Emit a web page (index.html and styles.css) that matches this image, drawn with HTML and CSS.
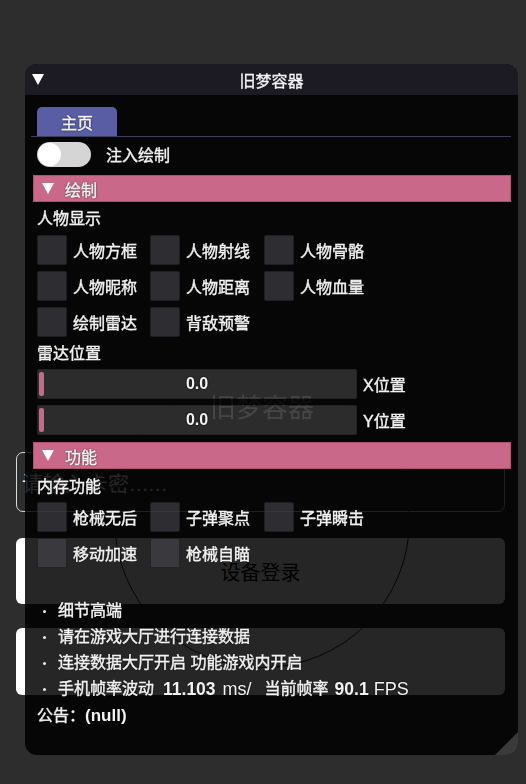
FILE: index.html
```html
<!DOCTYPE html>
<html lang="zh-CN">
<head>
<meta charset="utf-8">
<title>旧梦容器</title>
<link rel="stylesheet" href="styles.css">
</head>
<body>
<div class="backdrop">
  <div class="ghost-input"><span class="ghost-placeholder">请输入卡密......</span></div>
  <div class="ghost-btn ghost-login">设备登录</div>
  <div class="ghost-btn ghost-panel"></div>
  <div class="ghost-arc"></div>
</div>

<div class="window">
  <div class="titlebar">
    <span class="tri tri-title"></span>
    <span class="title">旧梦容器</span>
    <span></span>
  </div>
  <div class="content">
    <div class="tabbar"><div class="tab">主页</div></div>

    <div class="toggle-row">
      <span class="toggle"><span class="knob"></span></span>
      <span class="label">注入绘制</span>
    </div>

    <div class="header h-first"><span class="tri tri-header"></span><span>绘制</span></div>
    <div class="text-row">人物显示</div>
    <div class="cb-grid">
      <div class="cb"><span class="box"></span><span>人物方框</span></div>
      <div class="cb"><span class="box"></span><span>人物射线</span></div>
      <div class="cb"><span class="box"></span><span>人物骨骼</span></div>
      <div class="cb"><span class="box"></span><span>人物昵称</span></div>
      <div class="cb"><span class="box"></span><span>人物距离</span></div>
      <div class="cb"><span class="box"></span><span>人物血量</span></div>
      <div class="cb"><span class="box"></span><span>绘制雷达</span></div>
      <div class="cb"><span class="box"></span><span>背敌预警</span></div>
    </div>
    <div class="text-row">雷达位置</div>
    <div class="sliders">
      <div class="slider-row">
        <div class="slider"><span class="grab"></span><span class="val">0.0</span></div>
        <span class="slabel">X位置</span>
      </div>
      <div class="slider-row">
        <div class="slider"><span class="grab"></span><span class="val">0.0</span></div>
        <span class="slabel">Y位置</span>
      </div>
    </div>

    <div class="header h-second"><span class="tri tri-header"></span><span>功能</span></div>
    <div class="text-row tr-mem">内存功能</div>
    <div class="cb-grid cb-grid-mem">
      <div class="cb"><span class="box"></span><span>枪械无后</span></div>
      <div class="cb"><span class="box"></span><span>子弹聚点</span></div>
      <div class="cb"><span class="box"></span><span>子弹瞬击</span></div>
      <div class="cb"><span class="box"></span><span>移动加速</span></div>
      <div class="cb"><span class="box"></span><span>枪械自瞄</span></div>
    </div>

    <ul class="bullets">
      <li><span class="dot"></span>细节高端</li>
      <li><span class="dot"></span>请在游戏大厅进行连接数据</li>
      <li><span class="dot"></span>连接数据大厅开启 功能游戏内开启</li>
      <li><span class="dot"></span>手机帧率波动<b class="num n1">11.103</b><span class="lat ms">ms/</span><span class="cur">当前帧率</span><b class="num n2">90.1</b><span class="lat fps">FPS</span></li>
    </ul>
    <div class="text-row notice">公告：<span class="lat">(null)</span></div>
  </div>
  <div class="watermark">旧梦容器</div>
  <div class="grip"></div>
</div>
</body>
</html>
```

FILE: styles.css
```css
html, body {
  margin: 0;
  padding: 0;
}
body {
  width: 526px;
  height: 784px;
  overflow: hidden;
  background: #2d2d2d;
  font-family: "Liberation Sans", "Noto Sans CJK SC", sans-serif;
  font-size: 16px;
  color: #f2f2f2;
  position: relative;
}

/* ---------- login screen behind the window ---------- */
.backdrop {
  position: absolute;
  inset: 0;
  z-index: 0;
}
.ghost-input {
  position: absolute;
  left: 16px;
  top: 452px;
  width: 487px;
  height: 58px;
  border: 1px solid #d8d8d8;
  border-radius: 7px;
  display: flex;
  align-items: center;
}
.ghost-placeholder {
  margin-left: 5px;
  font-size: 21px;
  color: #ffffff;
  letter-spacing: 0.5px;
}
.ghost-btn {
  position: absolute;
  left: 16px;
  width: 489px;
  background: #ffffff;
  border-radius: 6px;
}
.ghost-login {
  top: 538px;
  height: 66px;
  display: flex;
  align-items: center;
  justify-content: center;
  color: #000;
  font-size: 20px;
}
.ghost-panel {
  top: 628px;
  height: 67px;
}
.ghost-arc {
  position: absolute;
  left: 114px;
  top: 372px;
  width: 294px;
  height: 294px;
  border: 1.5px solid #1e1e1e;
  border-radius: 50%;
}

/* ---------- window ---------- */
.window {
  position: relative;
  z-index: 1;
  margin: 64px 0 0 25px;
  width: 493px;
  height: 691px;
  border-radius: 12px;
  overflow: hidden;
  background: rgba(0, 0, 0, 0.85);
}
.titlebar {
  height: 31px;
  background: #1c1b24;
  display: grid;
  grid-template-columns: 1fr auto 1fr;
  align-items: center;
}
.title {
  font-size: 16px;
  color: #f4f4f4;
  -webkit-text-stroke: 0.3px #f4f4f4;
}
.tri {
  width: 0;
  height: 0;
  border-left: 6px solid transparent;
  border-right: 6px solid transparent;
  border-top: 11px solid #ffffff;
}
.tri-title {
  margin-left: 7px;
}
.tri-header {
  border-left-width: 6.5px;
  border-right-width: 6.5px;
  margin-right: 11px;
}

.content {
  padding: 0 7px 0 12px;
  display: flex;
  flex-direction: column;
  text-shadow: 0 0 2px #000;
  -webkit-text-stroke: 0.4px #f2f2f2;
}

.tabbar {
  margin: 12px 0 0 -6px;
  padding-left: 6px;
  border-bottom: 1px solid #3d3d5e;
  display: flex;
}
.tab {
  width: 80px;
  height: 29px;
  background: #595da4;
  border-radius: 5px 5px 0 0;
  display: flex;
  align-items: center;
  justify-content: center;
  color: #f4f4f4;
}

.toggle-row {
  margin-top: 5px;
  height: 25px;
  display: flex;
  align-items: center;
}
.toggle {
  width: 54px;
  height: 25px;
  border-radius: 13px;
  background: #d5d5d5;
  display: flex;
  align-items: center;
  padding-left: 1px;
  box-sizing: border-box;
}
.knob {
  width: 23px;
  height: 23px;
  border-radius: 50%;
  background: #ffffff;
}
.label {
  margin-left: 15px;
  position: relative;
  top: -1px;
}

.header {
  margin-left: -4px;
  height: 27px;
  background: #c96889;
  box-shadow: inset 0 0 0 1px rgba(120, 40, 70, 0.35);
  display: flex;
  align-items: center;
  padding-left: 9px;
  color: #f6f6f6;
}
.h-first { margin-top: 8px; }
.h-second { margin-top: 7px; }

.text-row {
  margin-top: 4px;
  height: 26px;
  line-height: 26px;
}
.tr-mem { margin-top: 5px; }

.cb-grid {
  margin-top: 3px;
  display: grid;
  grid-template-columns: 113px 114px 114px;
  grid-auto-rows: 30px;
  row-gap: 6px;
}
.cb-grid-mem { margin-top: 2px; }
.cb {
  display: flex;
  align-items: center;
  gap: 6px;
}
.box {
  width: 30px;
  height: 30px;
  box-sizing: border-box;
  border-radius: 2px;
  background: rgba(70, 70, 78, 0.62);
  border: 1px solid rgba(20, 20, 26, 0.6);
}

.sliders {
  margin-top: 2px;
  display: flex;
  flex-direction: column;
  gap: 6px;
}
.slider-row {
  display: flex;
  align-items: center;
  height: 30px;
}
.slider {
  position: relative;
  width: 320px;
  height: 30px;
  box-sizing: border-box;
  background: #2c2c2c;
  border: 1px solid #232323;
  border-radius: 2px;
  display: flex;
  align-items: center;
  justify-content: center;
}
.grab {
  position: absolute;
  left: 1px;
  top: 2px;
  width: 5px;
  height: 24px;
  border-radius: 2px;
  background: #c96889;
}
.val {
  font-weight: bold;
  font-size: 16px;
  -webkit-text-stroke: 0;
}
.slabel {
  margin-left: 6px;
}

.bullets {
  list-style: none;
  margin: 30px 0 0 0;
  padding: 0;
}
.bullets li {
  height: 26px;
  line-height: 26px;
  display: flex;
  align-items: center;
  white-space: pre;
}
.lat {
  font-size: 18px;
  -webkit-text-stroke: 0;
}
.num {
  font-size: 17.5px;
  font-weight: bold;
  -webkit-text-stroke: 0;
}
.n1 { margin-left: 9px; }
.ms { margin-left: 7px; }
.cur { margin-left: 13px; }
.n2 { margin-left: 6px; }
.fps { margin-left: 5px; }
.dot {
  width: 3px;
  height: 3px;
  border-radius: 50%;
  background: #e8e8e8;
  margin: 0 12px 0 6px;
}
.notice {
  margin-top: 1px;
}
.notice .lat {
  font-size: 17px;
  font-weight: bold;
}

.watermark {
  position: absolute;
  left: 185px;
  top: 329px;
  width: 104px;
  text-align: center;
  font-size: 26px;
  line-height: 30px;
  color: #5e5e5e;
  mix-blend-mode: color-dodge;
  pointer-events: none;
}

.grip {
  position: absolute;
  right: 0;
  bottom: 0;
  width: 23px;
  height: 23px;
  border-top-left-radius: 4px;
  background: #3a3a3a;
  clip-path: polygon(100% 0, 100% 100%, 0 100%);
}
```
